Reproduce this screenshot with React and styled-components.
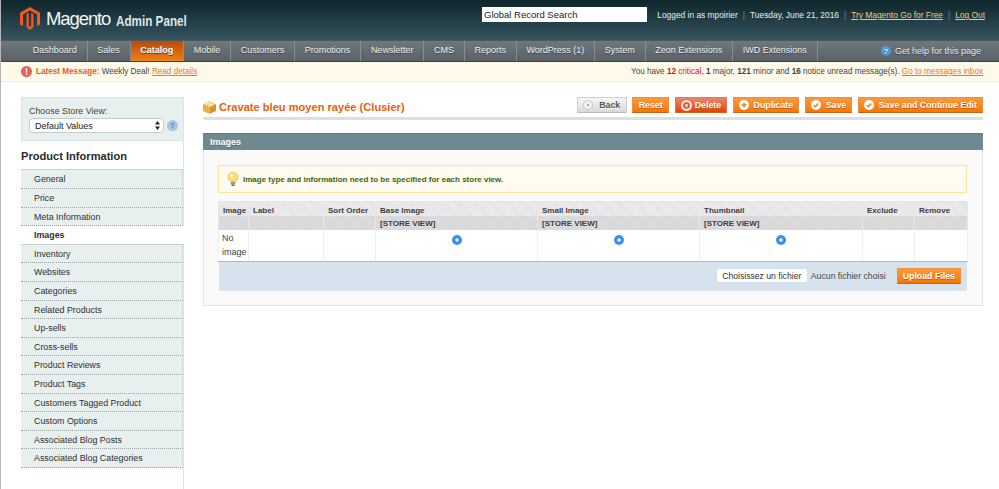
import styled, { createGlobalStyle } from "styled-components";

const GlobalStyle = createGlobalStyle`
  html, body { margin: 0; padding: 0; height: 100%; background: #fff; overflow: hidden; }
  body { font-family: "Liberation Sans", Arial, sans-serif; font-size: 9px; color: #2f2f2f; }
  * { box-sizing: border-box; }
`;

const navItems = ["Dashboard", "Sales", "Catalog", "Mobile", "Customers", "Promotions", "Newsletter", "CMS", "Reports", "WordPress (1)", "System", "Zeon Extensions", "IWD Extensions"];

const sideItems = ["General", "Price", "Meta Information", "Images", "Inventory", "Websites", "Categories", "Related Products", "Up-sells", "Cross-sells", "Product Reviews", "Product Tags", "Customers Tagged Product", "Custom Options", "Associated Blog Posts", "Associated Blog Categories"];

const columns = [
  { title: "Image", width: 30 },
  { title: "Label", width: 75 },
  { title: "Sort Order", width: 52 },
  { title: "Base Image", width: 162, store: true },
  { title: "Small Image", width: 162, store: true },
  { title: "Thumbnail", width: 163, store: true },
  { title: "Exclude", width: 52 },
  { title: "Remove", width: 53 },
];

const Page = styled.div`
  min-height: 100vh;
  border-left: 1px solid #b5b5b5;
  display: flex;
  flex-direction: column;
`;

const Header = styled.header`
  height: 40px;
  padding: 7px 14px 0 19px;
  background: linear-gradient(#0e252b, #35545f);
  display: flex;
  align-items: flex-start;
`;

const Logo = styled.div`
  width: 462px;
  display: flex;
  align-items: center;
  color: #f2f5f5;
`;

const LogoWord = styled.span`
  font-size: 18.5px;
  letter-spacing: -1.1px;
  margin-left: 6px;
`;

const LogoSub = styled.span`
  display: inline-block;
  font-size: 14px;
  font-weight: 700;
  color: #dfe6e8;
  margin: 4px 0 0 6px;
  transform: scaleX(0.835);
  transform-origin: left center;
`;

const SearchInput = styled.input`
  width: 165px;
  height: 15px;
  border: 0;
  padding: 0 2px;
  font: 9.5px "Liberation Sans", sans-serif;
  color: #222;
  background: #fff;
  &::placeholder { color: #222; opacity: 1; }
`;

const UserInfo = styled.div`
  margin-left: auto;
  height: 16px;
  line-height: 16px;
  font-size: 8.4px;
  color: #e8eeef;
  white-space: nowrap;
  i { font-style: normal; color: #6f8791; margin: 0 5px; }
  a { color: #edc974; text-decoration: underline; }
`;

const Nav = styled.nav`
  height: 22px;
  padding-left: 22px;
  background: linear-gradient(#6f777c, #596268);
  border-top: 1px solid #50595e;
  border-bottom: 1px solid #3b4348;
  display: flex;
  align-items: stretch;
`;

const NavItem = styled.a`
  padding: 0 9.75px;
  line-height: 19px;
  font-size: 9px;
  color: ${(p) => (p.$active ? "#fff" : "#eef1f2")};
  font-weight: ${(p) => (p.$active ? 700 : 400)};
  background: ${(p) => (p.$active ? "linear-gradient(#b44c0c, #f27f14)" : "none")};
  border-right: 1px solid ${(p) => (p.$active ? "#e07a1a" : "#868d92")};
  text-shadow: 0 1px 0 #3d4449;
  white-space: nowrap;
`;

const NavHelp = styled.a`
  margin-left: auto;
  padding-right: 18px;
  display: flex;
  align-items: center;
  gap: 4px;
  color: #e6eaec;
  font-size: 9px;
  text-shadow: 0 1px 0 #3d4449;
`;

const Notice = styled.div`
  height: 20px;
  padding: 0 16px 0 20px;
  background: #fff9ea;
  border-bottom: 1px solid #f3eeda;
  display: flex;
  align-items: center;
  justify-content: space-between;
  font-size: 8.17px;
  color: #444;
  a { color: #ea7a1e; text-decoration: underline; }
`;

const NoticeLeft = styled.div`
  display: flex;
  align-items: center;
  gap: 4px;
  b { color: #e8601c; }
`;

const Critical = styled.span`
  color: #d8121a;
  b { color: #d8121a; }
`;

const Body = styled.div`
  flex: 1;
  display: flex;
  padding-left: 20px;
`;

const Sidebar = styled.aside`
  flex: 0 0 163px;
  margin-top: 15px;
  border-right: 1px solid #e2e2e2;
`;

const StoreBox = styled.div`
  height: 44px;
  padding: 8px 0 0 7px;
  background: #e7efef;
  border: 1px solid #d9e4e4;
  border-right: 0;
`;

const StoreLabel = styled.div`
  font-size: 8.9px;
  line-height: 10px;
  color: #444;
`;

const StoreRow = styled.div`
  position: relative;
  display: flex;
  align-items: center;
  gap: 3px;
  margin-top: 2px;
`;

const StoreSelect = styled.select`
  appearance: none;
  width: 135px;
  height: 15px;
  padding: 0 0 0 5px;
  border: 1px solid #c6cccc;
  border-radius: 4px;
  background: #fff;
  font: 9px "Liberation Sans", sans-serif;
  color: #222;
`;

const SelectArrows = styled.svg`
  position: absolute;
  left: 126px;
  top: 3px;
`;

const SideTitle = styled.h3`
  margin: 0;
  height: 29.4px;
  line-height: 30px;
  font-size: 11.1px;
  font-weight: 700;
  color: #2b2b2b;
  border-bottom: 1px solid #c9d3d3;
`;

const SideList = styled.div`
  display: flex;
  flex-direction: column;
`;

const SideItem = styled.a`
  height: 18.6px;
  padding-left: 13px;
  line-height: 18px;
  font-size: 8.85px;
  font-weight: ${(p) => (p.$active ? 700 : 400)};
  color: #2f2f2f;
  background: ${(p) => (p.$active ? "#fff" : "#e7efef")};
  margin-right: ${(p) => (p.$active ? "-1px" : "0")};
  border-bottom: ${(p) => (p.$active ? "1px solid #c9d3d3" : "1px dotted #9aa3a3")};
  border-right: ${(p) => (p.$active ? "0" : "1px solid #d3dfdf")};
`;

const Main = styled.main`
  flex: 1;
  min-width: 0;
  padding: 15px 16px 0 19px;
`;

const TitleBar = styled.div`
  height: 23px;
  border-bottom: 3px solid #dfdfdf;
  display: flex;
  align-items: flex-start;
  justify-content: space-between;
`;

const Title = styled.h3`
  margin: 4px 0 0;
  display: flex;
  align-items: center;
  gap: 3px;
  font-size: 11.1px;
  line-height: 13px;
  font-weight: 700;
  color: #eb5e0a;
`;

const Buttons = styled.div`
  display: flex;
  gap: 5.5px;
`;

const Button = styled.button`
  height: 16px;
  padding: 0 ${(p) => p.$pad || 5}px;
  display: flex;
  align-items: center;
  gap: ${(p) => p.$gap || 4}px;
  font: 700 8.8px "Liberation Sans", sans-serif;
  white-space: nowrap;
  color: ${(p) => (p.$kind === "back" ? "#555" : "#fff")};
  text-shadow: ${(p) => (p.$kind === "back" ? "0 1px 0 #fff" : "0 1px 0 #c25a0a")};
  border: 1px solid ${(p) => (p.$kind === "back" ? "#cfcfcf" : p.$kind === "delete" ? "#e07a5a" : "#ed8f45")};
  border-bottom-color: ${(p) => (p.$kind === "back" ? "#bbb" : "#cf5f14")};
  background: ${(p) =>
    p.$kind === "back"
      ? "linear-gradient(#f6f6f6, #d9d9d9)"
      : p.$kind === "delete"
        ? "linear-gradient(#ee8468, #e2430f)"
        : "linear-gradient(#fb9a3c, #f57705)"};
`;

const Section = styled.section`
  margin-top: 13px;
  height: 173px;
  background: #fafafa;
  border: 1px solid #e3e3e3;
  border-top: 0;
`;

const SectionHead = styled.div`
  margin: 0 -1px;
  height: 17px;
  padding-left: 7px;
  line-height: 17px;
  font-size: 9px;
  font-weight: 700;
  color: #fff;
  background: #6f8992;
  border-top: 1px solid #5f7a84;
  text-shadow: 0 1px 0 #56707a;
`;

const SectionBody = styled.div`
  padding: 15px 15px 0 14px;
`;

const Tip = styled.div`
  height: 28px;
  padding-left: 8px;
  display: flex;
  align-items: center;
  gap: 4px;
  background: #fffbf0;
  border: 1px solid #fde49a;
  font-size: 8px;
  font-weight: 700;
  color: #3d6611;
`;

const ImageTable = styled.table`
  margin-top: 8px;
  width: 749px;
  table-layout: fixed;
  border-collapse: collapse;
  font-size: 8px;
  background: #fff;
  border: 1px solid #e2e6e6;
`;

const HeadCell = styled.th`
  height: ${(p) => p.$h}px;
  padding: ${(p) => p.$top || 0}px 4px 0;
  text-align: left;
  font-weight: 700;
  color: #3f3f3f;
  border-left: 1px solid #e8e8e8;
  border-right: 1px solid #e8e8e8;
  background: ${(p) => p.$bg};
`;

const BodyCell = styled.td`
  height: 31px;
  padding: 2px 3px 1px;
  vertical-align: top;
  text-align: ${(p) => (p.$center ? "center" : "left")};
  font-size: 9px;
  line-height: 13.5px;
  color: #444;
  border-left: 1px solid #ecefef;
  border-right: 1px solid #ecefef;
  border-bottom: 1px solid #a9bccb;
`;

const Radio = styled.span`
  display: inline-block;
  vertical-align: top;
  width: 10px;
  height: 10px;
  margin-top: 3px;
  border-radius: 50%;
  background: radial-gradient(circle, #fff 0 1.3px, #3b90f5 1.9px);
`;

const UploadBar = styled.div`
  height: 29px;
  width: 748px;
  margin-left: 1px;
  padding-right: 5px;
  display: flex;
  align-items: center;
  justify-content: flex-end;
  background: #d6e3ee;
  border: 1px solid #dde4ea;
  border-top: 0;
  font-size: 8.7px;
  color: #444;
`;

const FileButton = styled.button`
  height: 13px;
  padding: 0 5.5px;
  border: 0;
  border-radius: 2px;
  background: #fff;
  box-shadow: 0 0 1px #b9c6d1;
  font: 8.65px "Liberation Sans", sans-serif;
  color: #2f2f2f;
`;

const FileName = styled.span`
  margin: 0 11px 0 4px;
`;

function MagentoMark() {
  return (
    <svg width="20" height="23" viewBox="0 0 20 23">
      <path fill="#f1591f" d="M10 0 20 5.8V17.4L17 19.1V7.5L10 3.4 3 7.5V19.1L0 17.4V5.8Z" />
      <path fill="#f1591f" d="M6.5 7 8.8 5.7V19L10 19.7 11.2 19V5.7L13.5 7V20L10 23 6.5 20Z" />
    </svg>
  );
}

function CircleBadge({ size = 10, fill, children }) {
  return (
    <svg width={size} height={size} viewBox="0 0 12 12">
      <circle cx="6" cy="6" r="6" fill={fill} />
      {children}
    </svg>
  );
}

function CubeIcon() {
  return (
    <svg width="13" height="13" viewBox="0 0 13 13">
      <path fill="#f6d27c" d="M6.5 0 13 3 6.5 6 0 3Z" />
      <path fill="#e8b04c" d="M0 3 6.5 6V13L0 10Z" />
      <path fill="#d4942f" d="M13 3 6.5 6V13L13 10Z" />
      <path fill="#fff2cf" d="M2.5 1.9 9 4.9 10.3 4.3 3.8 1.3Z" />
    </svg>
  );
}

function BulbIcon() {
  return (
    <svg width="12" height="14" viewBox="0 0 12 14">
      <circle cx="6" cy="5.2" r="5" fill="#fbdc76" stroke="#e9c251" strokeWidth="0.8" />
      <circle cx="4.6" cy="3.8" r="1.6" fill="#fff6cc" />
      <rect x="3.6" y="9.8" width="4.8" height="3" rx="1" fill="#9a9a9a" />
      <rect x="4.6" y="12.6" width="2.8" height="1.4" fill="#666" />
    </svg>
  );
}

const checkMark = <path d="M3.4 6.2 5.3 8 8.6 4.2" fill="none" stroke="#f07a10" strokeWidth="1.7" />;

export default function App() {
  return (
    <Page>
      <GlobalStyle />
      <Header>
        <Logo>
          <MagentoMark />
          <LogoWord>Magento</LogoWord>
          <LogoSub>Admin Panel</LogoSub>
        </Logo>
        <SearchInput placeholder="Global Record Search" />
        <UserInfo>
          Logged in as mpoirier<i>|</i>Tuesday, June 21, 2016<i>|</i>
          <a>Try Magento Go for Free</a><i>|</i><a>Log Out</a>
        </UserInfo>
      </Header>
      <Nav>
        {navItems.map((item) => (
          <NavItem key={item} $active={item === "Catalog"}>{item}</NavItem>
        ))}
        <NavHelp>
          <CircleBadge fill="#4f9bd6">
            <text x="6" y="9" textAnchor="middle" fontSize="8.5" fontWeight="700" fill="#fff" fontFamily="Liberation Sans">?</text>
          </CircleBadge>
          Get help for this page
        </NavHelp>
      </Nav>
      <Notice>
        <NoticeLeft>
          <CircleBadge size={11} fill="#e5605a">
            <rect x="5.2" y="2.4" width="1.6" height="4.8" fill="#fff" />
            <rect x="5.2" y="8" width="1.6" height="1.6" fill="#fff" />
          </CircleBadge>
          <span><b>Latest Message:</b> Weekly Deal! <a>Read details</a></span>
        </NoticeLeft>
        <div>
          You have <Critical><b>12</b> critical</Critical>, <b>1</b> major, <b>121</b> minor and <b>16</b> notice unread message(s). <a>Go to messages inbox</a>
        </div>
      </Notice>
      <Body>
        <Sidebar>
          <StoreBox>
            <StoreLabel>Choose Store View:</StoreLabel>
            <StoreRow>
              <StoreSelect defaultValue="default">
                <option value="default">Default Values</option>
              </StoreSelect>
              <SelectArrows width="5" height="9" viewBox="0 0 5 9">
                <path d="M2.5 0 5 3.6H0ZM2.5 9 0 5.4H5Z" fill="#222" />
              </SelectArrows>
              <CircleBadge size={11} fill="#a9c3e2">
                <text x="6" y="9" textAnchor="middle" fontSize="8.5" fontWeight="700" fill="#4f86c6" fontFamily="Liberation Sans">?</text>
              </CircleBadge>
            </StoreRow>
          </StoreBox>
          <SideTitle>Product Information</SideTitle>
          <SideList>
            {sideItems.map((item) => (
              <SideItem key={item} $active={item === "Images"}>{item}</SideItem>
            ))}
          </SideList>
        </Sidebar>
        <Main>
          <TitleBar>
            <Title><CubeIcon />Cravate bleu moyen rayée (Clusier)</Title>
            <Buttons>
              <Button $kind="back" $pad={5.5} $gap={6}>
                <CircleBadge size={10} fill="#f4f4f4">
                  <circle cx="6" cy="6" r="5.4" fill="none" stroke="#bbb" />
                  <path d="M7 4 4.6 6 7 8Z" fill="#888" />
                </CircleBadge>
                Back
              </Button>
              <Button $pad={5.5}>Reset</Button>
              <Button $kind="delete" $gap={3}>
                <CircleBadge size={11} fill="#fbe3dc">
                  <circle cx="6" cy="6" r="3.6" fill="#e2502a" />
                  <path d="M4.6 4.6 7.4 7.4M7.4 4.6 4.6 7.4" stroke="#fff" strokeWidth="1.1" />
                </CircleBadge>
                Delete
              </Button>
              <Button $gap={5}>
                <CircleBadge size={10} fill="#fff">
                  <path d="M6 3V9M3 6H9" stroke="#f07a10" strokeWidth="1.7" />
                </CircleBadge>
                Duplicate
              </Button>
              <Button $gap={5}>
                <CircleBadge size={10} fill="#fff">{checkMark}</CircleBadge>
                Save
              </Button>
              <Button $gap={5}>
                <CircleBadge size={10} fill="#fff">{checkMark}</CircleBadge>
                Save and Continue Edit
              </Button>
            </Buttons>
          </TitleBar>
          <Section>
            <SectionHead>Images</SectionHead>
            <SectionBody>
              <Tip><BulbIcon />Image type and information need to be specified for each store view.</Tip>
              <ImageTable>
                <colgroup>
                  {columns.map((col) => <col key={col.title} style={{ width: col.width }} />)}
                </colgroup>
                <thead>
                  <tr>
                    {columns.map((col) => (
                      <HeadCell key={col.title} $h={14.5} $top={2} $bg="repeating-linear-gradient(45deg, #ececec 0 1px, #e4e4e4 1px 2px)">{col.title}</HeadCell>
                    ))}
                  </tr>
                  <tr>
                    {columns.map((col) => (
                      <HeadCell key={col.title} $h={14} $bg="repeating-linear-gradient(45deg, #dcdcdc 0 1px, #d7d7d7 1px 2px)">{col.store ? "[STORE VIEW]" : ""}</HeadCell>
                    ))}
                  </tr>
                </thead>
                <tbody>
                  <tr>
                    {columns.map((col) => (
                      <BodyCell key={col.title} $center={col.store}>
                        {col.title === "Image" && "No image"}
                        {col.store && <Radio />}
                      </BodyCell>
                    ))}
                  </tr>
                </tbody>
              </ImageTable>
              <UploadBar>
                <FileButton>Choisissez un fichier</FileButton>
                <FileName>Aucun fichier choisi</FileName>
                <Button $pad={5}>Upload Files</Button>
              </UploadBar>
            </SectionBody>
          </Section>
        </Main>
      </Body>
    </Page>
  );
}
